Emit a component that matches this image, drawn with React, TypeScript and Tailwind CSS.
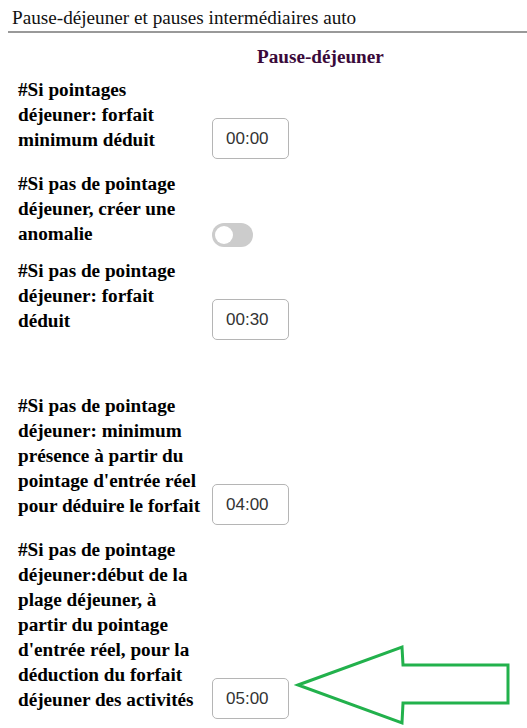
import React from "react";

const serif = { fontFamily: '"Liberation Serif", "Times New Roman", serif' };

function TimeInput({ value }: { value: string }) {
  return (
    <div
      className="w-[77px] h-[41px] border-[1.5px] border-[#b5b5b5] rounded-[5px] bg-white flex items-center pl-[13px] text-[17px] text-[#333] mb-[-7px] shrink-0"
      style={{ fontFamily: '"Liberation Sans", Arial, sans-serif' }}
    >
      {value}
    </div>
  );
}

function Toggle() {
  return (
    <div className="w-[41px] h-[24px] rounded-full bg-[#cccccc] flex items-center pl-[3px] mb-[-1px] shrink-0">
      <div className="w-[18px] h-[18px] rounded-full bg-white" />
    </div>
  );
}

function Row({
  label,
  control,
  mt,
}: {
  label: string;
  control: React.ReactNode;
  mt: string;
}) {
  return (
    <div className={`flex items-end ${mt}`}>
      <div className="w-[188px] text-[19.2px] leading-[25px] font-bold text-black shrink-0">
        {label}
      </div>
      <div className="ml-[6px]">{control}</div>
    </div>
  );
}

export default function App() {
  return (
    <div className="relative w-[527px] h-[728px] bg-white overflow-hidden" style={serif}>
      <div className="ml-2 border-b-2 border-[#999999] pt-[7px] pb-[2px]">
        <div className="pl-1 text-[19.2px] leading-[22px] text-[#111]">
          Pause-déjeuner et pauses intermédiaires auto
        </div>
      </div>
      <div className="mt-[11px] pl-[257px] text-[19.2px] leading-[25px] font-bold text-[#3a0a3a]">
        Pause-déjeuner
      </div>
      <div className="pl-[18px]">
        <Row
          mt="mt-[8px]"
          label="#Si pointages déjeuner: forfait minimum déduit"
          control={<TimeInput value="00:00" />}
        />
        <Row
          mt="mt-[19px]"
          label="#Si pas de pointage déjeuner, créer une anomalie"
          control={<Toggle />}
        />
        <Row
          mt="mt-[12px]"
          label="#Si pas de pointage déjeuner: forfait déduit"
          control={<TimeInput value="00:30" />}
        />
        <Row
          mt="mt-[60px]"
          label="#Si pas de pointage déjeuner: minimum présence à partir du pointage d'entrée réel pour déduire le forfait"
          control={<TimeInput value="04:00" />}
        />
        <Row
          mt="mt-[19px]"
          label="#Si pas de pointage déjeuner:début de la plage déjeuner, à partir du pointage d'entrée réel, pour la déduction du forfait déjeuner des activités"
          control={<TimeInput value="05:00" />}
        />
      </div>
      <svg
        className="absolute left-0 top-0 pointer-events-none"
        width="527"
        height="728"
        viewBox="0 0 527 728"
      >
        <polygon
          points="298,685 402,647 403,665 508,665 508,703 403,703 402,723"
          fill="none"
          stroke="#22b14c"
          strokeWidth="3"
          strokeLinejoin="miter"
        />
      </svg>
    </div>
  );
}
